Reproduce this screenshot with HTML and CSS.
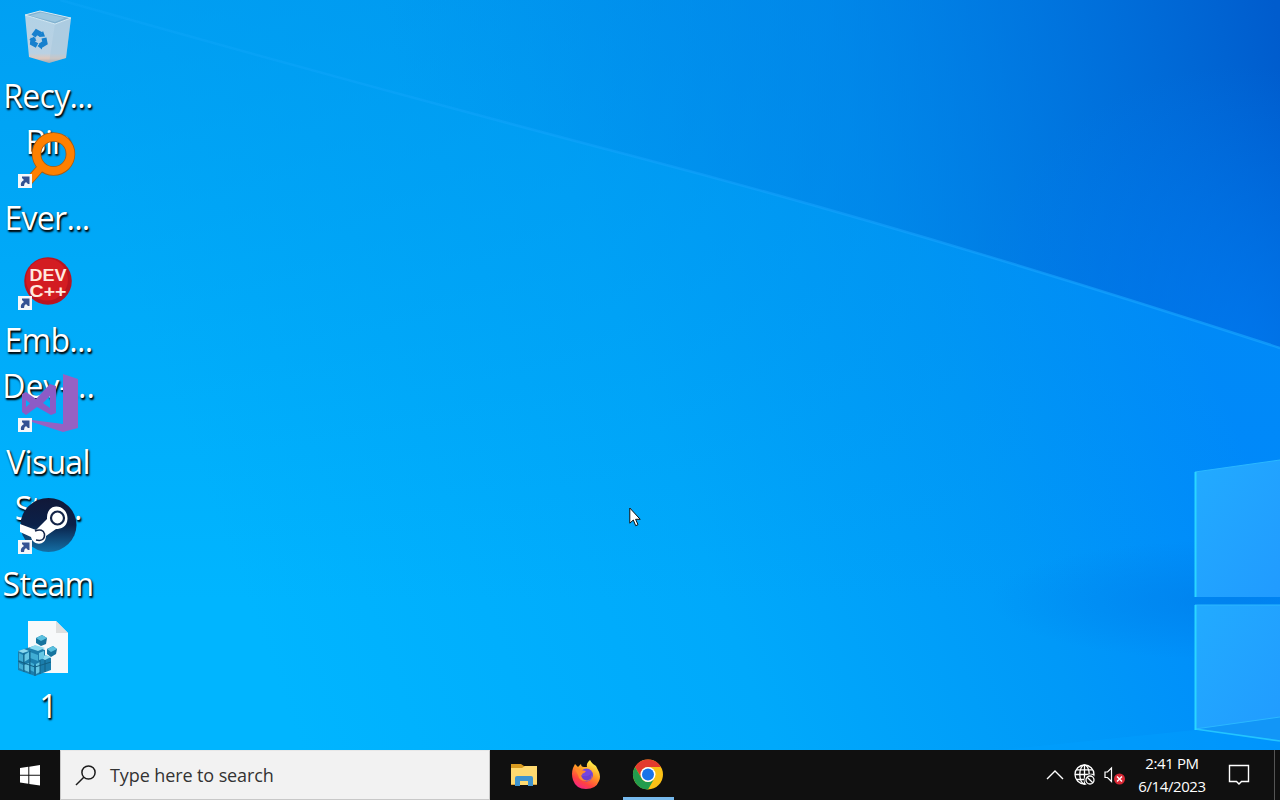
FILE: index.html
```html
<!DOCTYPE html>
<html lang="en">

<head>
    <meta charset="utf-8">
    <title>Desktop</title>
    <link rel="stylesheet" href="styles.css">
</head>

<body>
    <div class="screen">
        <div class="desktop">
            <svg class="wallpaper" viewBox="0 0 1280 750">
                <defs>
                    <linearGradient id="base" gradientUnits="userSpaceOnUse" x1="300" y1="750" x2="1230" y2="410">
                        <stop offset="0" stop-color="#00b5ff" />
                        <stop offset="0.45" stop-color="#00a9fb" />
                        <stop offset="0.75" stop-color="#0099f8" />
                        <stop offset="1" stop-color="#0088fc" />
                    </linearGradient>
                    <linearGradient id="topShade" gradientUnits="userSpaceOnUse" x1="0" y1="0" x2="0" y2="600">
                        <stop offset="0" stop-color="#008ee8" stop-opacity="0.55" />
                        <stop offset="1" stop-color="#008ee8" stop-opacity="0" />
                    </linearGradient>
                    <linearGradient id="corner" gradientUnits="userSpaceOnUse" x1="420" y1="200" x2="1280" y2="30">
                        <stop offset="0" stop-color="#0084e6" stop-opacity="0" />
                        <stop offset="0.5" stop-color="#007ee4" stop-opacity="0.55" />
                        <stop offset="1" stop-color="#005ccd" />
                    </linearGradient>
                    <radialGradient id="lowerCorner" gradientUnits="userSpaceOnUse" cx="1240" cy="345" r="280">
                        <stop offset="0" stop-color="#007cf4" stop-opacity="0.7" />
                        <stop offset="1" stop-color="#007cf4" stop-opacity="0" />
                    </radialGradient>
                    <linearGradient id="beam" gradientUnits="userSpaceOnUse" x1="60" y1="0" x2="1280" y2="348">
                        <stop offset="0" stop-color="#18acff" stop-opacity="0.2" />
                        <stop offset="0.6" stop-color="#18a4ff" stop-opacity="0.5" />
                        <stop offset="1" stop-color="#16a4ff" stop-opacity="0.7" />
                    </linearGradient>
                    <radialGradient id="glow" gradientUnits="userSpaceOnUse" cx="1230" cy="600" r="240" gradientTransform="translate(0 450) scale(1 0.25)">
                        <stop offset="0" stop-color="#007de8" stop-opacity="0.65" />
                        <stop offset="1" stop-color="#007de8" stop-opacity="0" />
                    </radialGradient>
                    <linearGradient id="pane" x1="0" y1="0" x2="1" y2="1">
                        <stop offset="0" stop-color="#22abff" />
                        <stop offset="1" stop-color="#219bff" />
                    </linearGradient>
                </defs>
                <rect width="1280" height="750" fill="url(#base)" />
                <rect width="1280" height="750" fill="url(#topShade)" />
                <path d="M60 0Q350 82 640 158T1280 348V0Z" fill="url(#corner)" />
                <path d="M60 0Q350 82 640 158T1280 348V0Z" fill="url(#lowerCorner)" />
                <path d="M60 0Q350 82 640 158T1280 348" fill="none" stroke="url(#beam)" stroke-width="2.5" />
                <ellipse cx="1230" cy="600" rx="240" ry="60" fill="url(#glow)" />
                <path d="M1000 750L1195 730L1280 742V750Z" fill="#00a0ff" opacity="0.4" />
                <!-- window panes -->
                <path d="M1195 472L1280 460V597H1195Z" fill="url(#pane)" />
                <path d="M1195 605H1280V741L1195 729Z" fill="url(#pane)" />
                <path d="M1195 729L1280 717V741Z" fill="#1296f7" />
                <path d="M1195 729L1280 717M1195 605H1280M1195 472L1280 460" fill="none" stroke="#2bb8ff" />
                <path d="M1195 729L1280 741" stroke="#23c5ff" stroke-width="1.6" />
                <path d="M1195.5 472V597M1195.5 605V730" stroke="#2ad6ff" stroke-width="2" />
            </svg>

            <div class="icons">
                <div class="shortcut">
                    <svg class="shortcut-icon" viewBox="18 8 60 60">
                        <defs>
                            <linearGradient id="bin" x1="0" y1="0" x2="0" y2="1">
                                <stop offset="0" stop-color="#b2d2e6" />
                                <stop offset="0.8" stop-color="#bad1e3" />
                                <stop offset="0.9" stop-color="#dec9bf" />
                                <stop offset="1" stop-color="#a4a9b1" />
                            </linearGradient>
                        </defs>
                        <path d="M25 15L55 24L71 18L66 58L49 63L29 57Z" fill="url(#bin)" />
                        <path d="M55 24L71 18L66 58L49 63Z" fill="#9dbfd7" opacity="0.3" />
                        <path d="M25 15L40 11L71 18L55 24Z" fill="#82b2d0" stroke="#d8e9f2" />
                        <path d="M30 15.500L41 12.500L65 18L55 22Z" fill="#9bc6df" />
                        <g fill="none" stroke="#1680ce" stroke-width="5">
                            <path d="M33.500 36L36.500 32L41 34.500" />
                            <path d="M44 38L45 43L40 46" />
                            <path d="M37 45.500L32.500 43L33 38" />
                        </g>
                        <path d="M39 37L45 36.500L43 31Z M42 41.500L37.500 46L42 49.500Z M29 40L34 36.500L36.500 41Z" fill="#1680ce" />
                    </svg>
                    <div class="label"><span>Recy...</span><span class="tight">Bin</span></div>
                </div>

                <div class="shortcut">
                    <svg class="shortcut-icon" viewBox="18 8 60 60">
                        <path d="M43 43L29 59" stroke="#a85a10" stroke-width="8.500" />
                        <circle cx="53.500" cy="32" r="17" fill="none" stroke="#a85a10" stroke-width="9.500" />
                        <path d="M44 42L29 59" stroke="#ff8000" stroke-width="7" />
                        <circle cx="53.500" cy="32" r="17" fill="none" stroke="#ff8000" stroke-width="8" />
                        <rect x="18" y="52" width="14" height="14" fill="#f5f7fa" />
                        <path d="M22 56V54.500H29.500V62H28L26 60Q24 61 24 64H21Q20 60 24 58Z" fill="#345293" />
                    </svg>
                    <div class="label"><span class="ever">Ever...</span></div>
                </div>

                <div class="shortcut">
                    <svg class="shortcut-icon" viewBox="18 8 60 60">
                        <circle cx="48" cy="37" r="23.800" fill="#b91420" />
                        <circle cx="47" cy="35.500" r="21" fill="#d31c22" />
                        <text class="dev-text" x="48" y="36.500" textLength="37" lengthAdjust="spacingAndGlyphs">DEV</text>
                        <text class="dev-text" x="48" y="52.500" textLength="37" lengthAdjust="spacingAndGlyphs">C++</text>
                        <rect x="18" y="52" width="14" height="14" fill="#f5f7fa" />
                        <path d="M22 56V54.500H29.500V62H28L26 60Q24 61 24 64H21Q20 60 24 58Z" fill="#345293" />
                    </svg>
                    <div class="label"><span class="emb">Emb...</span><span class="dev">Dev-...</span></div>
                </div>

                <div class="shortcut">
                    <svg class="shortcut-icon" viewBox="18 8 60 60">
                        <path d="M63 8L78 13V62L63 66L32 56V54L63 58Z" fill="#9661c3" />
                        <path d="M22 28L26 26L36 33L50 18L56 20V47L51 49L37 41L26 49L22 46ZM26 34V41L30 37.500ZM50 30L43 37L50 42Z" fill="#8c5bc6" fill-rule="evenodd" />
                        <rect x="18" y="52" width="14" height="14" fill="#f5f7fa" />
                        <path d="M22 56V54.500H29.500V62H28L26 60Q24 61 24 64H21Q20 60 24 58Z" fill="#345293" />
                    </svg>
                    <div class="label"><span>Visual</span><span class="tight">Stu...</span></div>
                </div>

                <div class="shortcut">
                    <svg class="shortcut-icon" viewBox="18 8 60 60">
                        <defs>
                            <linearGradient id="steam" x1="0" y1="0" x2="0" y2="1">
                                <stop offset="0" stop-color="#111838" />
                                <stop offset="0.5" stop-color="#0b2149" />
                                <stop offset="1" stop-color="#146fa5" />
                            </linearGradient>
                        </defs>
                        <ellipse cx="48.500" cy="37" rx="28" ry="27" fill="url(#steam)" />
                        <path d="M20 36L36 42L47 31C46 13 68 16 67.500 31C67 39 61 41 56 41L46 48C46 58 33 58 31 49L20 44Z" fill="#fff" />
                        <circle cx="57.500" cy="30" r="6.500" fill="#fff" stroke="#142448" stroke-width="2.200" />
                        <path d="M35 43Q43 40 44.500 46Q45 54 36 52" fill="none" stroke="#142448" stroke-width="1.500" />
                        <rect x="18" y="52" width="14" height="14" fill="#f5f7fa" />
                        <path d="M22 56V54.500H29.500V62H28L26 60Q24 61 24 64H21Q20 60 24 58Z" fill="#345293" />
                    </svg>
                    <div class="label"><span>Steam</span></div>
                </div>

                <div class="shortcut">
                    <svg class="shortcut-icon" viewBox="18 8 60 60">
                        <path d="M28 11H56L68 23V63H28Z" fill="#f7f9fa" />
                        <path d="M56 11V23H68Z" fill="#dedfdf" />
                        <path d="M18 41L24 39L34 36L45 40V45L51 48V60L35 66L18 60Z" fill="#1b7ead" />
                        <path d="M18 41L24 39L29 41L23 43ZM29 38L35 35L45 38L38 41ZM40 47L46 45L51 47L45 50Z" fill="#8cdaf0" />
                        <path d="M19 43L23 45V52L19 50ZM30 42L38 45V51L30 48ZM19 53L23 55V60L19 58ZM30 52L34 54V62L30 60Z" fill="#40add4" />
                        <path d="M24 45L29 42V49L24 52ZM24 55L29 53V62L24 60ZM39 43L44 41V48L39 50ZM36 54L40 52V62L36 64Z" fill="#66c7e5" />
                        <path d="M18 51L35 57L51 52M24 43V62M30 41V64M35 55V66M40 50V64M45 50V62" fill="none" stroke="#126184" />
                        <path d="M36 28L42 25L47 28L46 34L41 36L36 33ZM47 39L53 36L57 39L56 44L51 47L47 44Z" fill="#16749e" />
                        <path d="M36 28L42 25L47 28L41 31ZM47 39L53 36L57 39L51 42Z" fill="#5ac0df" />
                    </svg>
                    <div class="label"><span>1</span></div>
                </div>
            </div>

            <svg class="cursor" viewBox="0 0 12 20">
                <path d="M0.800 1V16.200L4.300 13L6.700 18.700L9 17.700L6.600 12.300H11.200Z" fill="#fff" stroke="#111" stroke-width="1" />
            </svg>
        </div>

        <div class="taskbar">
            <div class="start">
                <svg width="20" height="21" viewBox="0 0 20 21">
                    <path d="M0 3L8.300 1.800V9.700H0ZM9.300 1.700L20 0V9.700H9.300ZM0 10.700H8.300V18.800L0 17.600ZM9.300 10.700H20V20.500L9.300 19Z" fill="#fff" />
                </svg>
            </div>
            <div class="search">
                <svg width="22" height="22" viewBox="0 0 22 22">
                    <circle cx="13.500" cy="8.500" r="6.600" fill="none" stroke="#1c1c1c" stroke-width="1.500" />
                    <path d="M8.800 13.200L1 21" stroke="#1c1c1c" stroke-width="1.500" />
                </svg>
                <span class="search-text">Type here to search</span>
            </div>
            <div class="apps">
                <div class="app">
                    <svg width="32" height="32" viewBox="0 0 32 32">
                        <path d="M3 5H13L16 7H29V26H3Z" fill="#d99b20" />
                        <path d="M3 9H14L17 7H29V26H3Z" fill="#ffda70" />
                        <path d="M7 27V19Q7 17 9 17H23Q25 17 25 19V27H20V22H12V27Z" fill="#3f94cf" />
                        <path d="M3 25.500H7M25 25.500H29" stroke="#dfa740" />
                    </svg>
                </div>
                <div class="app">
                    <svg width="32" height="32" viewBox="0 0 32 32">
                        <defs>
                            <linearGradient id="fox" x1="0.800" y1="0.100" x2="0.300" y2="1">
                                <stop offset="0" stop-color="#fff34a" />
                                <stop offset="0.400" stop-color="#ff9a24" />
                                <stop offset="0.750" stop-color="#ff4340" />
                                <stop offset="1" stop-color="#f52386" />
                            </linearGradient>
                        </defs>
                        <path d="M3 9L5 5L8 8Q10 6 11 5Q11 8 14 8H17Q16 4 20 1Q22 5 26 7L29 13Q31 18 29 22Q26 30 16 30Q6 30 3 21Q1 15 3 9Z" fill="url(#fox)" />
                        <circle cx="16.500" cy="16" r="6.500" fill="#7545dd" />
                        <path d="M5 10Q8 9 11 11L16 12Q15 14 12 15Q12 19 17 19Q21 18 22 15Q23 22 16 22Q9 22 8 16Z" fill="#ff8a2b" />
                        <path d="M11 16Q14 18 17 17Q21 16 21 13Q24 20 17 21.500Q12 21 11 16Z" fill="#6a3fd0" />
                    </svg>
                </div>
                <div class="app active">
                    <svg width="32" height="32" viewBox="0 0 32 32">
                        <circle cx="16" cy="15.500" r="15" fill="#fbc116" />
                        <path d="M3 8A15 15 0 0 1 29 8H16A7.500 7.500 0 0 0 9.500 19Z" fill="#e33b2e" />
                        <path d="M3 8A15 15 0 0 0 16 30.500L22.500 19.200A7.500 7.500 0 0 1 9.500 19.200Z" fill="#229c4d" />
                        <circle cx="16" cy="15.500" r="7.500" fill="#fff" />
                        <circle cx="16" cy="15.500" r="6" fill="#1a73e8" />
                    </svg>
                </div>
            </div>
            <div class="tray">
                <svg width="18" height="12" viewBox="0 0 18 12">
                    <path d="M1 10L9 2L17 10" fill="none" stroke="#fff" stroke-width="1.400" />
                </svg>
                <svg class="globe" width="22" height="22" viewBox="0 0 22 22">
                    <g fill="none" stroke="#fff" stroke-width="1.300">
                        <circle cx="10.500" cy="10.500" r="9.500" />
                        <ellipse cx="10.500" cy="10.500" rx="4.700" ry="9.500" />
                        <path d="M10.500 1V20M1 10.500H20M2.500 5.800H18.500M2.500 15.500H18.500" />
                        <circle cx="16" cy="16" r="5" fill="#101010" stroke="#101010" />
                        <circle cx="16" cy="16" r="4" />
                        <path d="M13.200 13.200L18.800 18.800" />
                    </g>
                </svg>
                <svg class="volume" width="22" height="20" viewBox="0 0 22 20">
                    <path d="M1 7H3.500L7.500 3V16.500L3.500 12.500H1Z" fill="none" stroke="#fff" stroke-width="1.200" />
                    <circle cx="15.500" cy="14" r="5.500" fill="#d92835" />
                    <path d="M13 11.500L18 16.500M18 11.500L13 16.500" stroke="#fff" stroke-width="1.400" />
                </svg>
                <div class="clock">
                    <span>2:41 PM</span>
                    <span>6/14/2023</span>
                </div>
                <svg class="notifications" width="22" height="22" viewBox="0 0 22 22">
                    <path d="M1.500 1.500H20.500V17.500H13.500L11 20L8.500 17.500H1.500Z" fill="none" stroke="#fff" stroke-width="1.400" />
                </svg>
                <div class="show-desktop"></div>
            </div>
        </div>
    </div>
</body>

</html>
```
FILE: styles.css
```css
* {
    box-sizing: border-box;
}

body {
    margin: 0;
    font-family: "Open Sans", "Noto Sans", sans-serif;
}

.screen {
    width: 1280px;
    height: 800px;
    display: flex;
    flex-direction: column;
    overflow: hidden;
}

.desktop {
    position: relative;
    height: 750px;
    overflow: hidden;
    background: #00a8fb;
}

.wallpaper {
    position: absolute;
    top: 0;
    left: 0;
    width: 1280px;
    height: 750px;
}

.icons {
    position: relative;
    width: 96px;
    display: grid;
    grid-auto-rows: 122px;
}

.shortcut {
    height: 122px;
    padding-top: 8px;
    display: flex;
    flex-direction: column;
    align-items: center;
}

/* the next icon overlaps the second label line */
.shortcut-icon {
    width: 60px;
    height: 60px;
    flex: none;
    position: relative;
    z-index: 1;
}

.label {
    display: flex;
    flex-direction: column;
    align-items: center;
    margin-top: 5px;
    color: #fff;
    font-size: 32px;
    line-height: 46px;
    white-space: nowrap;
    text-shadow: 1px 2px 2px #000, 1px 1px 2px rgba(0, 0, 0, 0.7);
}

.label span {
    letter-spacing: -0.7px;
}

.label .tight {
    letter-spacing: -1.2px;
}

.label .ever {
    margin-left: -2px;
}

.label .emb {
    margin-left: 1px;
}

.label .dev {
    margin-left: 1px;
    letter-spacing: 0;
}

.dev-text {
    font-family: "Liberation Sans", sans-serif;
    font-size: 16px;
    font-weight: bold;
    fill: #ffe9df;
    text-anchor: middle;
}

.cursor {
    position: absolute;
    left: 629px;
    top: 507px;
    width: 12px;
    height: 20px;
}

.taskbar {
    height: 50px;
    display: flex;
    background: #101010;
    color: #fff;
}

.start {
    width: 60px;
    display: flex;
    align-items: center;
    justify-content: center;
}

.search {
    width: 430px;
    padding-left: 14px;
    display: flex;
    align-items: center;
    gap: 13px;
    background: #f2f2f2;
    border: 1px solid #c8c8c8;
    border-top-color: #e8e8e8;
    color: #333;
}

.search-text {
    font-size: 18px;
    letter-spacing: -0.1px;
}

.apps {
    display: flex;
    gap: 11px;
    padding-left: 9px;
}

.app {
    width: 51px;
    display: flex;
    align-items: center;
    justify-content: center;
    border-bottom: 3px solid transparent;
    padding-top: 3px;
    padding-right: 2px;
}

.app.active {
    border-bottom-color: #76b9ed;
}

.tray {
    margin-left: auto;
    display: flex;
    align-items: center;
}

.globe {
    margin-left: 10px;
}

.volume {
    margin-left: 8px;
}

.clock {
    width: 82px;
    margin-left: 5px;
    display: flex;
    flex-direction: column;
    align-items: center;
    font-size: 15px;
    line-height: 23px;
    letter-spacing: -0.4px;
}

.notifications {
    margin-left: 15px;
}

.show-desktop {
    width: 6px;
    height: 50px;
    margin-left: 24px;
    border-left: 1px solid #555;
}
```
